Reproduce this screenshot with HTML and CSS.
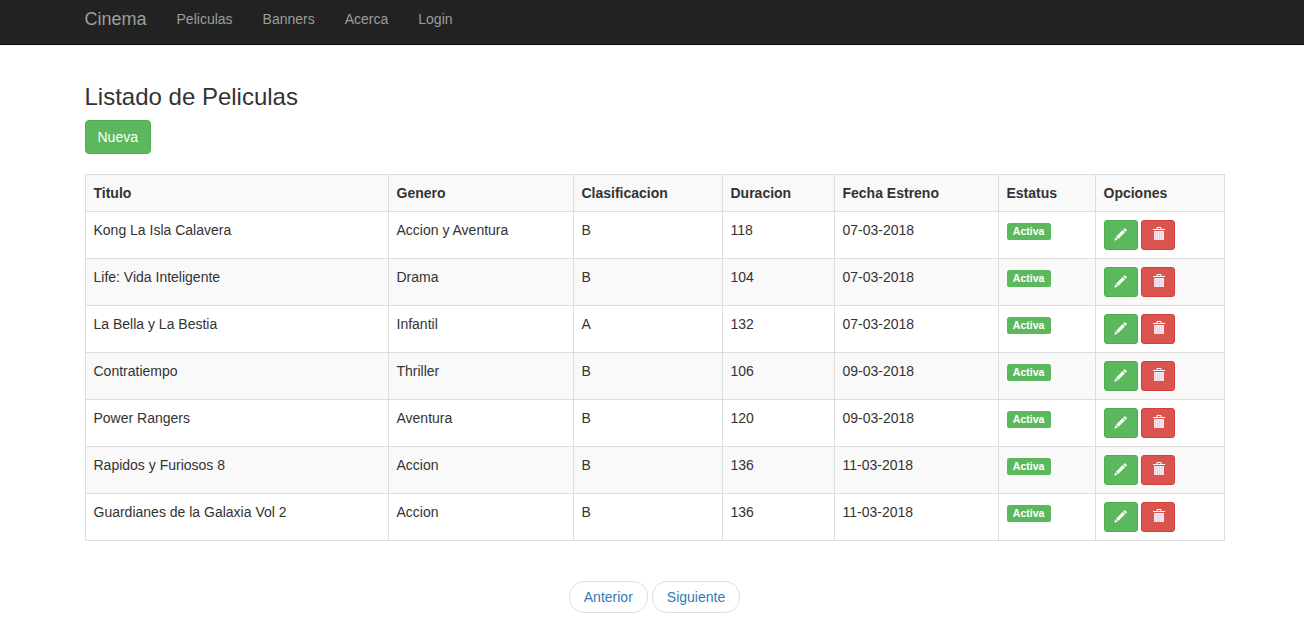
FILE: index.html
```html
<!DOCTYPE html>
<html lang="es">
<head>
<meta charset="utf-8">
<title>Listado de Peliculas</title>
<link rel="stylesheet" href="styles.css">
</head>
<body>
<svg class="sprite" aria-hidden="true">
  <symbol id="pencil" viewBox="0 0 13 13"><path d="M9.3 1.4 10.3.4q.5-.4 1 0l1.3 1.3q.4.5 0 1l-1 1zM8.7 2 11 4.3 4.3 11 2 8.7zM1.4 9.3 3.7 11.6.3 12.7z"/></symbol>
  <symbol id="trash" viewBox="0 0 12 14"><path d="M3.5 2V1q0-1 1-1h3q1 0 1 1v1H12v1H0V2zm1 0h3V1h-3z"/><path class="can" d="M1 4h10v9H1z"/><path class="slats" d="M2.5 5v8M4.5 5v8M6.5 5v8M8.5 5v8"/></symbol>
</svg>
<nav class="navbar">
  <a class="brand">Cinema</a>
  <a>Peliculas</a><a>Banners</a><a>Acerca</a><a>Login</a>
</nav>
<main class="container">
  <h3>Listado de Peliculas</h3>
  <a class="btn btn-new">Nueva</a>
  <table class="movies">
    <colgroup><col class="c-title"><col class="c-genre"><col class="c-rating"><col class="c-length"><col class="c-date"><col class="c-status"><col class="c-options"></colgroup>
    <thead><tr><th>Titulo</th><th>Genero</th><th>Clasificacion</th><th>Duracion</th><th>Fecha Estreno</th><th>Estatus</th><th>Opciones</th></tr></thead>
    <tbody>
      <tr><td>Kong La Isla Calavera</td><td>Accion y Aventura</td><td>B</td><td>118</td><td>07-03-2018</td><td><span class="label">Activa</span></td><td><div class="actions"><a class="btn-sm edit"><svg><use href="#pencil"/></svg></a><a class="btn-sm delete"><svg><use href="#trash"/></svg></a></div></td></tr>
      <tr><td>Life: Vida Inteligente</td><td>Drama</td><td>B</td><td>104</td><td>07-03-2018</td><td><span class="label">Activa</span></td><td><div class="actions"><a class="btn-sm edit"><svg><use href="#pencil"/></svg></a><a class="btn-sm delete"><svg><use href="#trash"/></svg></a></div></td></tr>
      <tr><td>La Bella y La Bestia</td><td>Infantil</td><td>A</td><td>132</td><td>07-03-2018</td><td><span class="label">Activa</span></td><td><div class="actions"><a class="btn-sm edit"><svg><use href="#pencil"/></svg></a><a class="btn-sm delete"><svg><use href="#trash"/></svg></a></div></td></tr>
      <tr><td>Contratiempo</td><td>Thriller</td><td>B</td><td>106</td><td>09-03-2018</td><td><span class="label">Activa</span></td><td><div class="actions"><a class="btn-sm edit"><svg><use href="#pencil"/></svg></a><a class="btn-sm delete"><svg><use href="#trash"/></svg></a></div></td></tr>
      <tr><td>Power Rangers</td><td>Aventura</td><td>B</td><td>120</td><td>09-03-2018</td><td><span class="label">Activa</span></td><td><div class="actions"><a class="btn-sm edit"><svg><use href="#pencil"/></svg></a><a class="btn-sm delete"><svg><use href="#trash"/></svg></a></div></td></tr>
      <tr><td>Rapidos y Furiosos 8</td><td>Accion</td><td>B</td><td>136</td><td>11-03-2018</td><td><span class="label">Activa</span></td><td><div class="actions"><a class="btn-sm edit"><svg><use href="#pencil"/></svg></a><a class="btn-sm delete"><svg><use href="#trash"/></svg></a></div></td></tr>
      <tr><td>Guardianes de la Galaxia Vol 2</td><td>Accion</td><td>B</td><td>136</td><td>11-03-2018</td><td><span class="label">Activa</span></td><td><div class="actions"><a class="btn-sm edit"><svg><use href="#pencil"/></svg></a><a class="btn-sm delete"><svg><use href="#trash"/></svg></a></div></td></tr>
    </tbody>
  </table>
  <div class="pager"><a>Anterior</a><a>Siguiente</a></div>
</main>
</body>
</html>
```
FILE: styles.css
```css
* { box-sizing: border-box; }
html { overflow: hidden; }
body {
  margin: 0;
  font: 14px/20px "Liberation Sans", Arial, sans-serif;
  color: #333;
  background: #fff;
}
.sprite { display: none; }

.navbar {
  display: flex;
  height: 45px;
  padding: 9px 0 0 69.5px;
  background: #222;
  border-bottom: 1px solid #080808;
}
.navbar a { padding: 0 15px; color: #9d9d9d; }
.navbar .brand { font-size: 18px; }

.container { width: 1140px; margin-left: 84.5px; padding-top: 38.6px; }
h3 {
  margin: 0 0 10px;
  font-size: 24px;
  font-weight: 500;
  line-height: 26.4px;
}
.btn {
  display: block;
  width: fit-content;
  padding: 6px 12px;
  border: 1px solid #4cae4c;
  border-radius: 4px;
  color: #fff;
  background: #5cb85c;
}

.movies {
  width: 1140px;
  margin: 20px 0 0;
  border-collapse: collapse;
  table-layout: fixed;
}
.c-title { width: 303px; }
.c-genre { width: 185px; }
.c-rating { width: 149px; }
.c-length { width: 112px; }
.c-date { width: 164px; }
.c-status { width: 97px; }
.c-options { width: 129px; }
th, td {
  height: 47px;
  padding: 8px;
  border: 1px solid #ddd;
  text-align: left;
  vertical-align: top;
}
th { height: 37px; background: #f9f9f9; }
tbody tr:nth-child(even) { background: #f9f9f9; }

.label {
  padding: 2.1px 6.3px 3.15px;
  border-radius: 2.625px;
  font-size: 10.5px;
  font-weight: 700;
  line-height: 1;
  color: #fff;
  background: #5cb85c;
  vertical-align: baseline;
}
.actions { display: flex; gap: 3px; }
.btn-sm {
  display: flex;
  width: 34px;
  height: 30px;
  padding: 7px 0 0 9.5px;
  border: 1px solid;
  border-radius: 3px;
}
.btn-sm svg { width: 13px; height: 13px; fill: #fff; }
.edit { background: #5cb85c; border-color: #4cae4c; }
.delete { background: #d9534f; border-color: #d43f3a; padding: 6px 0 0 11.5px; }
.delete svg { width: 12px; height: 14px; }
#trash .can { fill: #f8e6ee; }
#trash .slats { stroke: #eed0e4; stroke-width: 1; }

.pager { display: flex; justify-content: center; gap: 4px; margin-top: 40px; }
.pager a {
  padding: 5px 14px;
  border: 1px solid #ddd;
  border-radius: 15px;
  color: #337ab7;
}
```
